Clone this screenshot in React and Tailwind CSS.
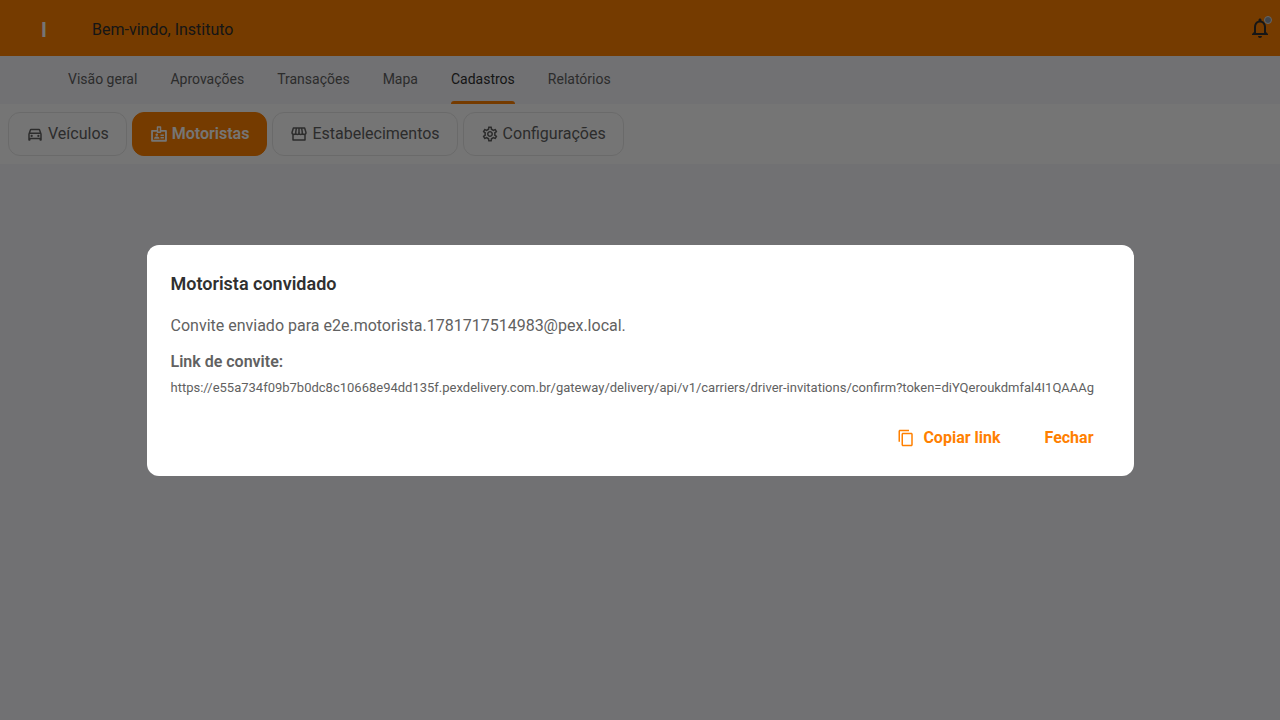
import { MdContentCopy, MdOutlineDirectionsCar, MdOutlineNotifications, MdOutlineSettings } from "react-icons/md"

const tabs = ["Visão geral", "Aprovações", "Transações", "Mapa", "Cadastros", "Relatórios"]

const inviteLink =
  "https://e55a734f09b7b0dc8c10668e94dd135f.pexdelivery.com.br/gateway/delivery/api/v1/carriers/driver-invitations/confirm?token=diYQeroukdmfal4I1QAAAg"

const StoreIcon = ({ className }) => (
  <svg viewBox="0 0 24 24" fill="none" stroke="currentColor" strokeWidth="2" strokeLinejoin="round" className={className}>
    <path d="M4.500 4h15l1.800 6c0 1.500-1 2.500-2.300 2.500S16.500 11.500 16.500 10.500c0 1-1 2-2.250 2S12 11.500 12 10.500c0 1-1 2-2.250 2S7.500 11.500 7.500 10.500c0 1-0.900 2-2.200 2S2.700 11.500 2.700 10z" />
    <path d="M4 12.500V20h16v-7.500M8.500 4l-1 6.500M12 4v6.500M15.500 4l1 6.500" />
  </svg>
)

const BadgeIcon = ({ className }) => (
  <svg viewBox="0 0 24 24" fill="none" stroke="currentColor" strokeWidth="2.400" strokeLinejoin="round" className={className}>
    <path d="M9.500 7.700H2.700V21h18.600V7.700h-6.800" />
    <path d="M10 2.700h4v7h-4z" strokeWidth="2" />
    <path d="M14 13.700h4.500M14 17h4.500" strokeWidth="1.800" />
    <circle cx="9" cy="13" r="1.700" fill="currentColor" stroke="none" />
    <path d="M5.500 18.300v-.8c0-1.400 2-2.100 3.500-2.100s3.500.7 3.500 2.100v.8z" fill="currentColor" stroke="none" />
  </svg>
)

const sections = [
  { label: "Veículos", icon: MdOutlineDirectionsCar },
  { label: "Motoristas", icon: BadgeIcon, active: true },
  { label: "Estabelecimentos", icon: StoreIcon },
  { label: "Configurações", icon: MdOutlineSettings },
]

const Header = () => (
  <header className="h-14 flex items-center justify-between bg-[#ff8000] pl-6 pr-2">
    <div className="flex items-center gap-7 pt-1">
      <span className="w-10 text-center text-xl font-bold text-white">I</span>
      <span className="text-base text-[#303030]">Bem-vindo, Instituto</span>
    </div>
    <button type="button" aria-label="Notificações" className="relative text-[#303030]">
      <MdOutlineNotifications className="w-6 h-6" />
      <span className="absolute right-0 top-0 w-2 h-2 rounded-full border border-[#dddddd] bg-[#8c96a5]" />
    </button>
  </header>
)

const Tabs = () => (
  <nav className="h-12 flex gap-[33px] bg-[#f6f6fb] px-[68px]">
    {tabs.map((tab) => (
      <a
        key={tab}
        href="#"
        className={
          tab === "Cadastros"
            ? "relative flex items-center pb-0.5 text-sm text-[#303030]"
            : "flex items-center pb-0.5 text-sm text-[#616161]"
        }
      >
        {tab}
        {tab === "Cadastros" && <span className="absolute inset-x-0 bottom-0 h-[3px] rounded-t-sm bg-[#ff8000]" />}
      </a>
    ))}
  </nav>
)

const Sections = () => (
  <div className="flex gap-[5px] bg-white p-2">
    {sections.map(({ label, icon: Icon, active }) => (
      <button
        key={label}
        type="button"
        className={
          active
            ? "h-11 flex items-center gap-1 rounded-xl border border-[#ff8000] bg-[#ff8000] px-[17px] text-base font-semibold text-white"
            : "h-11 flex items-center gap-1 rounded-xl border border-[#e8e8e8] bg-white px-[17px] text-base text-[#616161]"
        }
      >
        <Icon className="w-[18px] h-[18px]" />
        {label}
      </button>
    ))}
  </div>
)

const InviteDialog = () => (
  <div className="fixed inset-0 flex items-center justify-center bg-black/54 p-10">
    <div
      role="dialog"
      aria-modal="true"
      aria-labelledby="invite-title"
      className="w-full max-w-[987px] rounded-xl bg-white px-6 pt-6 pb-[18px]"
    >
      <h2 id="invite-title" className="text-lg leading-[30px] font-semibold text-[#303030]">
        Motorista convidado
      </h2>
      <p className="mt-[15px] text-base text-[#616161]">Convite enviado para e2e.motorista.1781717514983@pex.local.</p>
      <p className="mt-3 text-base font-semibold text-[#616161]">Link de convite:</p>
      <p className="mt-1 text-[13px] leading-5 break-all text-[#616161]">{inviteLink}</p>
      <div className="mt-5 flex justify-end gap-3 text-base font-bold text-[#ff8000]">
        <button type="button" className="h-10 flex items-center gap-2 px-4">
          <MdContentCopy className="w-[18px] h-[18px]" />
          Copiar link
        </button>
        <button type="button" className="h-10 px-4">
          Fechar
        </button>
      </div>
    </div>
  </div>
)

const App = () => (
  <div className="min-h-screen bg-[#f6f6fb] font-['Roboto',sans-serif]">
    <Header />
    <Tabs />
    <Sections />
    <InviteDialog />
  </div>
)

export default App
